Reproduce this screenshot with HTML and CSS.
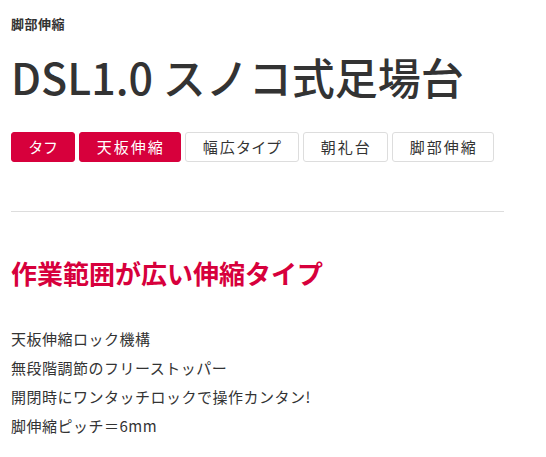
FILE: index.html
```html
<!DOCTYPE html>
<html lang="ja">
<head>
    <meta charset="UTF-8">
    <title>DSL1.0 スノコ式足場台</title>
    <link rel="stylesheet" href="styles.css">
</head>
<body>
<div class="product">
    <div class="category">脚部伸縮</div>
    <h1 class="title">DSL1.0 スノコ式足場台</h1>
    <ul class="tags">
        <li class="tag active">タフ</li>
        <li class="tag active">天板伸縮</li>
        <li class="tag">幅広タイプ</li>
        <li class="tag">朝礼台</li>
        <li class="tag">脚部伸縮</li>
    </ul>
    <hr class="divider">
    <h2 class="catch">作業範囲が広い伸縮タイプ</h2>
    <ul class="features">
        <li>天板伸縮ロック機構</li>
        <li>無段階調節のフリーストッパー</li>
        <li>開閉時にワンタッチロックで操作カンタン!</li>
        <li>脚伸縮ピッチ＝6mm</li>
    </ul>
</div>
</body>
</html>
```

FILE: styles.css
```css
body, html {
    margin: 0;
    background: #fff;
    color: #333;
    font-family: "Noto Sans CJK JP", "Noto Sans", sans-serif;
}
.product {
    width: 493px;
    margin-left: 11px;
    padding-top: 13px;
}
.category {
    font-size: 13px;
    font-weight: 700;
    letter-spacing: 0.5px;
    line-height: 22px;
}
.title {
    margin: 11px 0 0;
    font-size: 43px;
    font-weight: 500;
    line-height: 60px;
    white-space: nowrap;
}
.tags {
    display: flex;
    gap: 4px;
    list-style: none;
    margin: 26px 0 0;
    padding: 0;
}
.tag {
    height: 28px;
    line-height: 28px;
    padding: 0 15px 0 17px;
    border: 1px solid #ddd;
    border-radius: 3px;
    font-size: 15px;
    letter-spacing: 2px;
    font-feature-settings: "palt";
    color: #333;
}
.tag.active {
    background: #d7003c;
    border-color: #d7003c;
    color: #fff;
}
.divider {
    margin: 49px 0 0;
    border: 0;
    border-top: 1px solid #ddd;
}
.catch {
    margin: 44px 0 0;
    font-size: 26px;
    font-weight: 700;
    line-height: 34px;
    color: #d7003c;
}
.features {
    list-style: none;
    margin: 34px 0 0;
    padding: 0;
    font-size: 15px;
    letter-spacing: 0.5px;
    line-height: 29px;
}
```
